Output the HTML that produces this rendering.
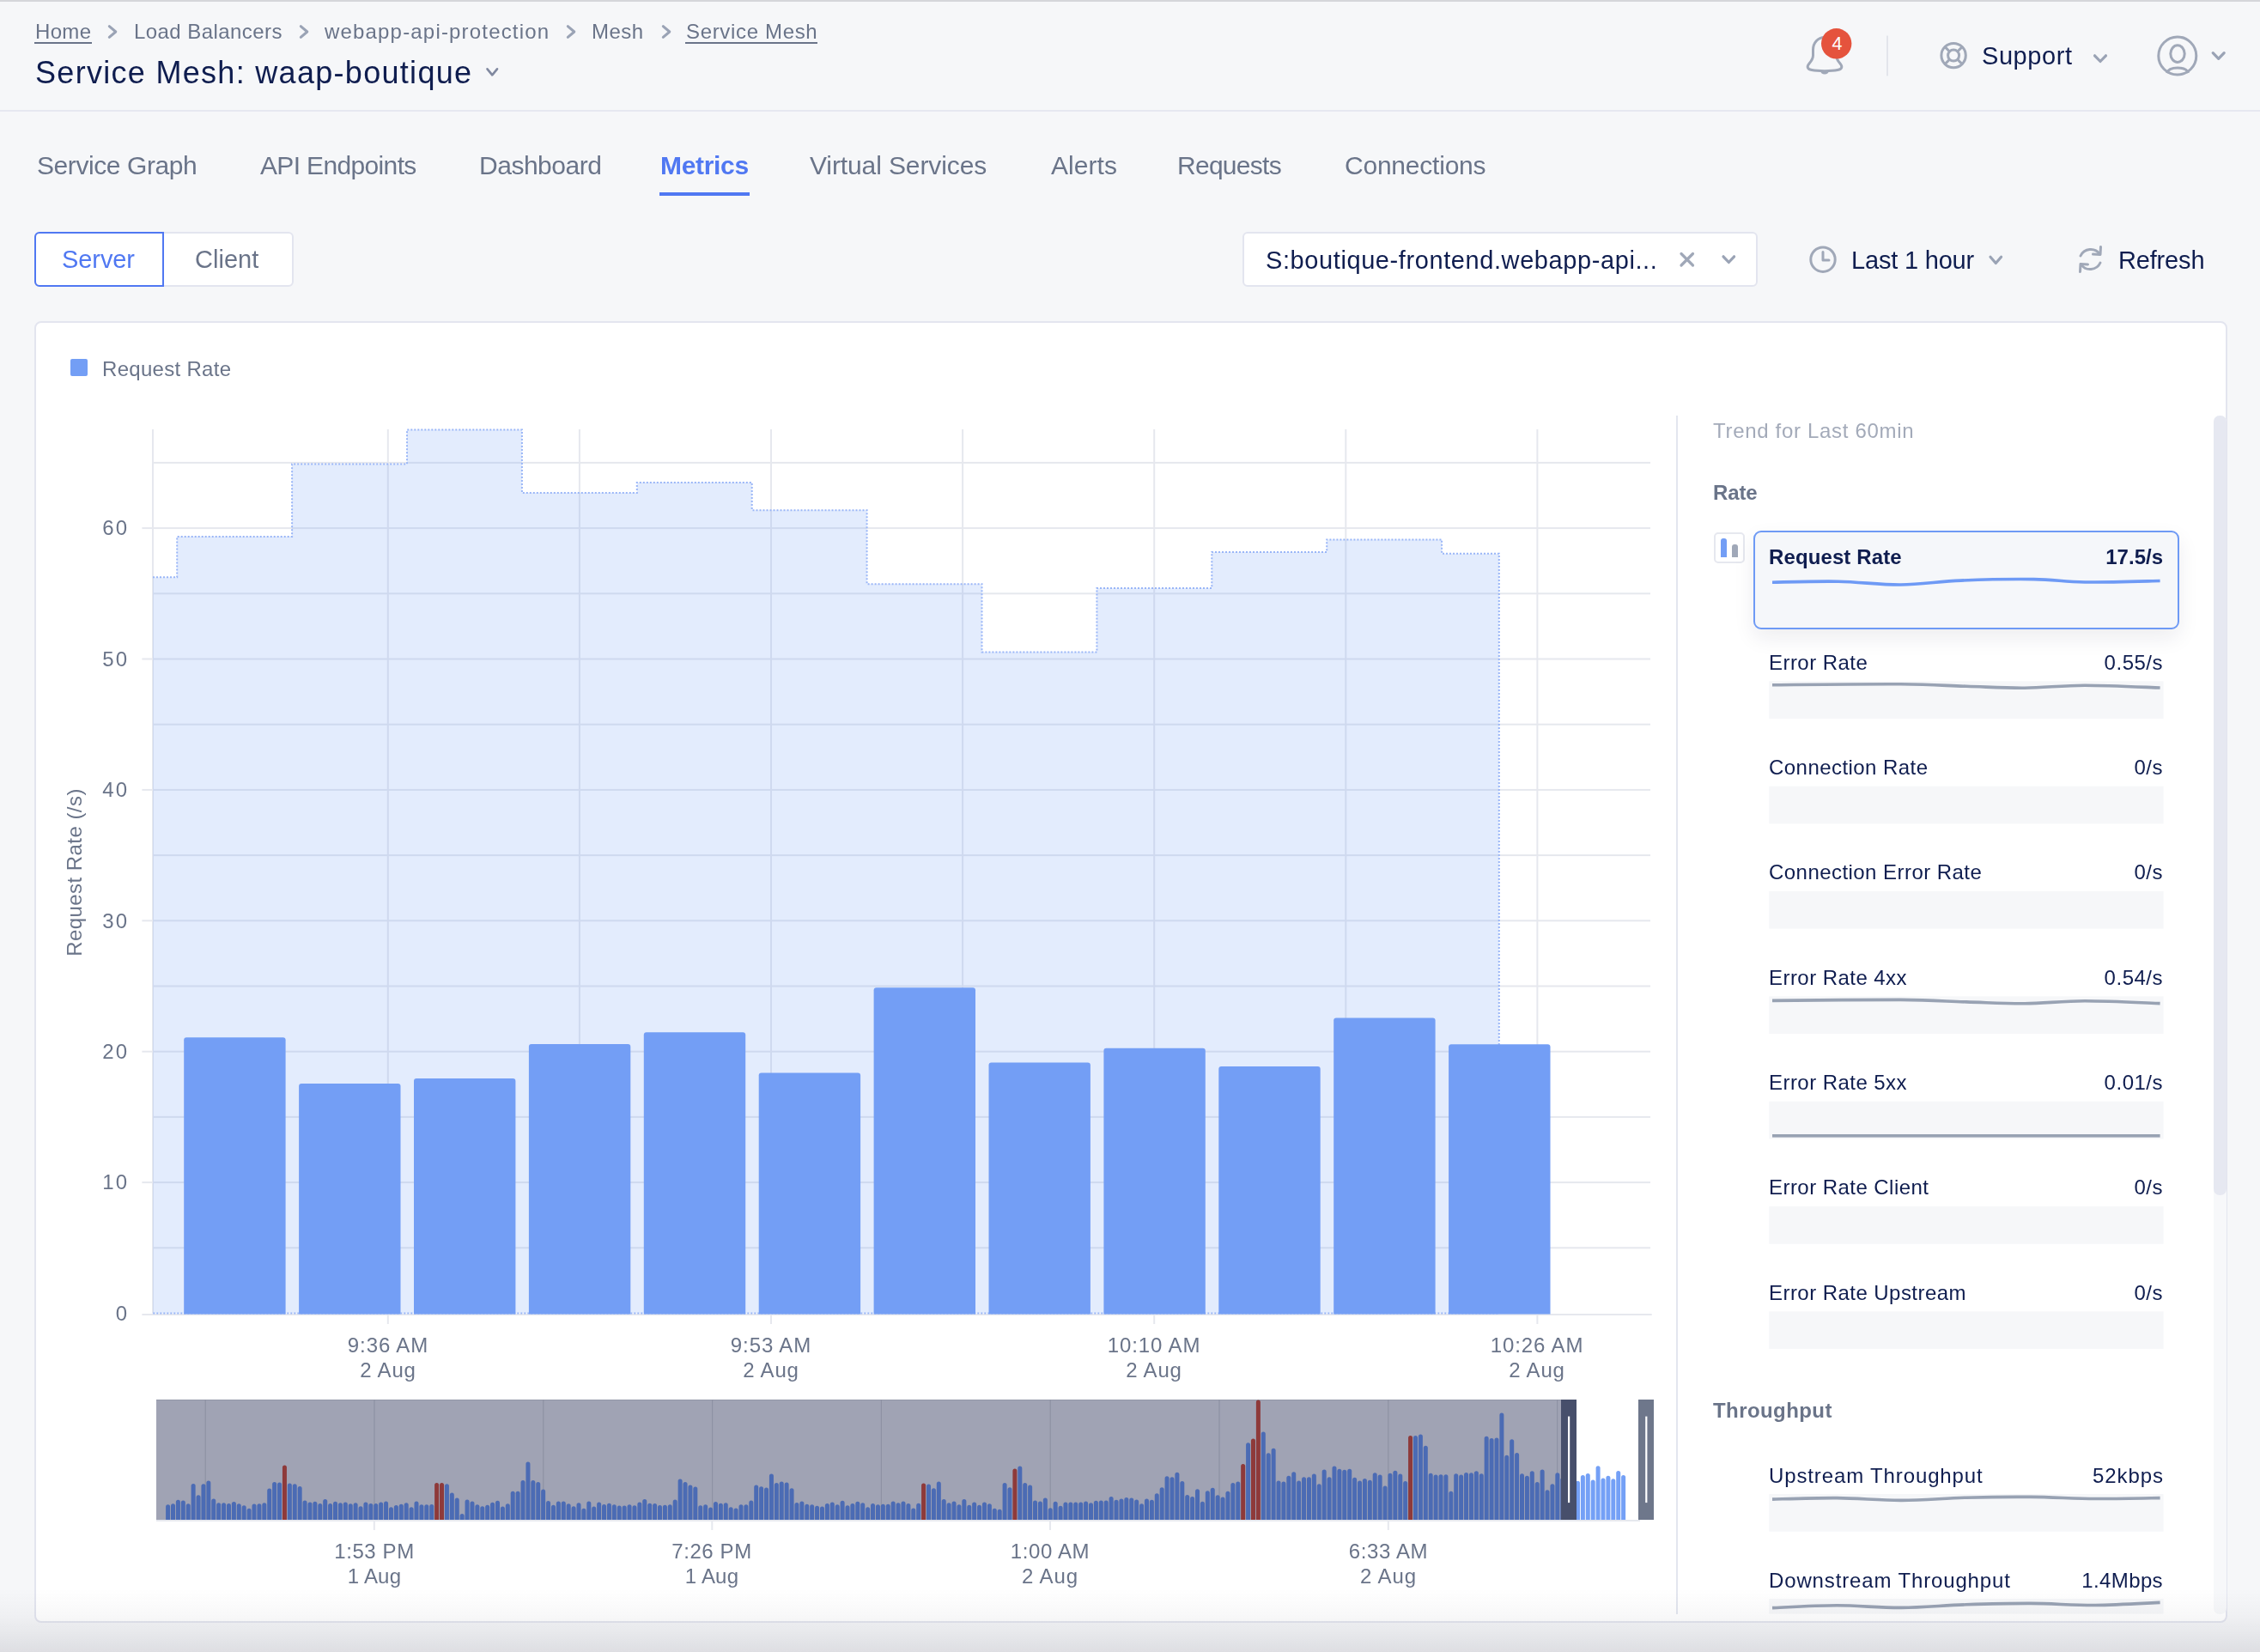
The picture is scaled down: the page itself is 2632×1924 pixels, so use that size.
<!DOCTYPE html>
<html><head><meta charset="utf-8">
<style>
*{margin:0;padding:0;box-sizing:border-box}
html,body{width:2632px;height:1924px;overflow:hidden;background:#f6f7f9;font-family:"Liberation Sans",sans-serif}
.a{position:absolute}
.t{position:absolute;white-space:nowrap;will-change:transform}
svg{position:absolute;left:0;top:0;overflow:visible}
</style></head><body>
<div class="a" style="left:0;top:0;width:2632px;height:2px;background:#d5d6da"></div>
<div class="a" style="left:0;top:128px;width:2632px;height:2px;background:#e6e8f1"></div>
<!-- breadcrumb underlines -->
<div class="a" style="left:40px;top:49px;width:67px;height:2px;background:#6a7489"></div>
<div class="a" style="left:798px;top:49px;width:153.5px;height:2px;background:#6a7489"></div>
<!-- tab underline -->
<div class="a" style="left:767.7px;top:223.5px;width:105px;height:4.5px;background:#5078f2"></div>
<!-- segmented -->
<div class="a" style="left:40px;top:270px;width:302px;height:64px;background:#fff;border:2px solid #e3e5ef;border-radius:6px"></div>
<div class="a" style="left:40px;top:270px;width:151px;height:64px;border:2px solid #5078f2;border-radius:6px 0 0 6px"></div>
<!-- select -->
<div class="a" style="left:1447px;top:270px;width:600px;height:64px;background:#fff;border:2px solid #e3e5ef;border-radius:6px"></div>
<!-- card -->
<div class="a" style="left:40px;top:374px;width:2554px;height:1516px;background:#fff;border:2px solid #e3e5ef;border-radius:8px"></div>
<!-- legend square -->
<div class="a" style="left:82px;top:418px;width:20px;height:20px;background:#739ef5;border-radius:2px"></div>
<!-- right panel divider -->
<div class="a" style="left:1952px;top:484px;width:2px;height:1396px;background:#e3e6ef"></div>
<!-- scrollbar -->
<div class="a" style="left:2578px;top:484px;width:15px;height:1396px;background:#f7f8fa;border-radius:7px"></div>
<div class="a" style="left:2578px;top:484px;width:15px;height:908px;background:#e6e8f1;border-radius:7px"></div>
<!-- icon box -->
<div class="a" style="left:1996px;top:620px;width:35.8px;height:35.6px;border:2px solid #e6e8ef;border-radius:5px;background:#fff"></div>
<div class="a" style="left:2003.7px;top:627px;width:7.3px;height:22px;background:#739ef5;border-radius:3px 3px 0 0"></div>
<div class="a" style="left:2016.5px;top:634px;width:7.4px;height:15px;background:#a0a8b8;border-radius:3px 3px 0 0"></div>
<!-- selected card -->
<div class="a" style="left:2042px;top:618.2px;width:495.5px;height:115px;background:#f5f7fa;border:2px solid #6e9af5;border-radius:9px;box-shadow:0 10px 24px rgba(20,30,60,0.08)"></div>
<svg width="2632" height="1924" viewBox="0 0 2632 1924"><rect x="2060.3" y="793.4" width="459.3" height="43.6" fill="#f6f7f9"/><rect x="2060.3" y="915.7" width="459.3" height="43.6" fill="#f6f7f9"/><rect x="2060.3" y="1038.0" width="459.3" height="43.6" fill="#f6f7f9"/><rect x="2060.3" y="1160.4" width="459.3" height="43.6" fill="#f6f7f9"/><rect x="2060.3" y="1282.8" width="459.3" height="43.6" fill="#f6f7f9"/><rect x="2060.3" y="1405.1" width="459.3" height="43.6" fill="#f6f7f9"/><rect x="2060.3" y="1527.4" width="459.3" height="43.6" fill="#f6f7f9"/><rect x="2060.3" y="1740.1" width="459.3" height="43.6" fill="#f6f7f9"/><rect x="2060.3" y="1862.0" width="459.3" height="17.6" fill="#f6f7f9"/><path d="M2064.0,678.2 C2076.8,678.0 2116.1,676.7 2141.0,677.2 C2165.9,677.7 2189.7,681.2 2213.5,681.0 C2237.3,680.8 2257.8,677.2 2283.6,676.1 C2309.4,675.0 2344.5,674.3 2368.6,674.6 C2392.7,674.9 2403.5,677.7 2428.0,678.0 C2452.5,678.3 2501.0,676.8 2515.6,676.5" fill="none" stroke="#6e9af5" stroke-width="3.6"/><path d="M2064.0,797.8 C2088.9,797.6 2175.8,796.5 2213.5,796.8 C2251.2,797.0 2265.9,798.6 2290.0,799.3 C2314.1,800.0 2335.0,801.4 2358.0,801.2 C2381.0,801.0 2401.7,798.2 2428.0,798.2 C2454.3,798.2 2501.0,800.5 2515.6,801.0" fill="none" stroke="#98a2b3" stroke-width="3.6"/><path d="M2064.0,1165.4 C2088.9,1165.2 2175.8,1164.2 2213.5,1164.4 C2251.2,1164.7 2265.9,1166.2 2290.0,1166.9 C2314.1,1167.6 2335.0,1169.0 2358.0,1168.8 C2381.0,1168.6 2401.7,1165.8 2428.0,1165.8 C2454.3,1165.8 2501.0,1168.1 2515.6,1168.6" fill="none" stroke="#98a2b3" stroke-width="3.6"/><rect x="2064" y="1321" width="451.6" height="3.6" fill="#98a2b3"/><path d="M2064.0,1746.1 C2076.6,1745.8 2114.2,1744.4 2139.3,1744.6 C2164.4,1744.8 2189.4,1747.5 2214.5,1747.4 C2239.6,1747.3 2264.7,1744.9 2289.8,1744.2 C2314.9,1743.5 2339.9,1743.2 2365.0,1743.4 C2390.1,1743.6 2415.2,1745.3 2440.3,1745.5 C2465.4,1745.7 2503.1,1744.8 2515.6,1744.6" fill="none" stroke="#98a2b3" stroke-width="3.6"/><path d="M2064.0,1872.6 C2076.6,1872.1 2114.2,1869.8 2139.3,1869.8 C2164.4,1869.8 2189.4,1872.6 2214.5,1872.4 C2239.6,1872.2 2264.7,1869.6 2289.8,1868.8 C2314.9,1868.0 2339.9,1867.3 2365.0,1867.4 C2390.1,1867.5 2415.2,1869.7 2440.3,1869.5 C2465.4,1869.3 2503.1,1866.9 2515.6,1866.4" fill="none" stroke="#98a2b3" stroke-width="3.6"/></svg>
<svg class="chart" width="2632" height="1924" viewBox="0 0 2632 1924"><rect x="165.4" y="1530.0" width="1758.3" height="2" fill="#e6e8ee"/><rect x="178" y="1452.3" width="1744.0" height="2" fill="#e6e8ee"/><rect x="165.4" y="1376.1" width="1756.6" height="2" fill="#e6e8ee"/><rect x="178" y="1299.9" width="1744.0" height="2" fill="#e6e8ee"/><rect x="165.4" y="1223.7" width="1756.6" height="2" fill="#e6e8ee"/><rect x="178" y="1147.5" width="1744.0" height="2" fill="#e6e8ee"/><rect x="165.4" y="1071.3" width="1756.6" height="2" fill="#e6e8ee"/><rect x="178" y="995.1" width="1744.0" height="2" fill="#e6e8ee"/><rect x="165.4" y="918.9" width="1756.6" height="2" fill="#e6e8ee"/><rect x="178" y="842.7" width="1744.0" height="2" fill="#e6e8ee"/><rect x="165.4" y="766.5" width="1756.6" height="2" fill="#e6e8ee"/><rect x="178" y="690.3" width="1744.0" height="2" fill="#e6e8ee"/><rect x="165.4" y="614.1" width="1756.6" height="2" fill="#e6e8ee"/><rect x="178" y="537.9" width="1744.0" height="2" fill="#e6e8ee"/><rect x="450.8" y="500" width="2" height="1042.0" fill="#e6e8ee"/><rect x="673.9" y="500" width="2" height="1029.5" fill="#e6e8ee"/><rect x="897.0" y="500" width="2" height="1042.0" fill="#e6e8ee"/><rect x="1120.1" y="500" width="2" height="1029.5" fill="#e6e8ee"/><rect x="1343.2" y="500" width="2" height="1042.0" fill="#e6e8ee"/><rect x="1566.3" y="500" width="2" height="1029.5" fill="#e6e8ee"/><rect x="1789.4" y="500" width="2" height="1042.0" fill="#e6e8ee"/><rect x="177" y="500" width="2" height="1029.5" fill="#e6e8ee"/><path d="M178.0,672.2 L206.2,672.2 L206.2,624.9 L340.1,624.9 L340.1,540.4 L474.0,540.4 L474.0,500.5 L607.9,500.5 L607.9,574.0 L741.8,574.0 L741.8,562.0 L875.7,562.0 L875.7,594.3 L1009.6,594.3 L1009.6,680.2 L1143.5,680.2 L1143.5,759.4 L1277.4,759.4 L1277.4,685.0 L1411.3,685.0 L1411.3,643.0 L1545.2,643.0 L1545.2,628.4 L1679.1,628.4 L1679.1,644.8 L1745.8,644.8 L1745.8,1529.5 L178.0,1529.5 Z" fill="rgba(115,158,245,0.2)"/><path d="M178.0,672.2 L206.2,672.2 L206.2,624.9 L340.1,624.9 L340.1,540.4 L474.0,540.4 L474.0,500.5 L607.9,500.5 L607.9,574.0 L741.8,574.0 L741.8,562.0 L875.7,562.0 L875.7,594.3 L1009.6,594.3 L1009.6,680.2 L1143.5,680.2 L1143.5,759.4 L1277.4,759.4 L1277.4,685.0 L1411.3,685.0 L1411.3,643.0 L1545.2,643.0 L1545.2,628.4 L1679.1,628.4 L1679.1,644.8 L1745.8,644.8 L1745.8,1529.5 L178.0,1529.5" fill="none" stroke="#9ab6f7" stroke-width="2" stroke-dasharray="2 2"/><path d="M214.2,1530.5 V1211.2 Q214.2,1208.2 217.2,1208.2 H329.6 Q332.6,1208.2 332.6,1211.2 V1530.5 Z" fill="#739ef5"/><path d="M348.1,1530.5 V1265.0 Q348.1,1262.0 351.1,1262.0 H463.5 Q466.5,1262.0 466.5,1265.0 V1530.5 Z" fill="#739ef5"/><path d="M482.0,1530.5 V1259.0 Q482.0,1256.0 485.0,1256.0 H597.4 Q600.4,1256.0 600.4,1259.0 V1530.5 Z" fill="#739ef5"/><path d="M615.9,1530.5 V1219.0 Q615.9,1216.0 618.9,1216.0 H731.3 Q734.3,1216.0 734.3,1219.0 V1530.5 Z" fill="#739ef5"/><path d="M749.8,1530.5 V1205.2 Q749.8,1202.2 752.8,1202.2 H865.2 Q868.2,1202.2 868.2,1205.2 V1530.5 Z" fill="#739ef5"/><path d="M883.7,1530.5 V1252.6 Q883.7,1249.6 886.7,1249.6 H999.1 Q1002.1,1249.6 1002.1,1252.6 V1530.5 Z" fill="#739ef5"/><path d="M1017.6,1530.5 V1153.2 Q1017.6,1150.2 1020.6,1150.2 H1133.0 Q1136.0,1150.2 1136.0,1153.2 V1530.5 Z" fill="#739ef5"/><path d="M1151.5,1530.5 V1240.5 Q1151.5,1237.5 1154.5,1237.5 H1266.9 Q1269.9,1237.5 1269.9,1240.5 V1530.5 Z" fill="#739ef5"/><path d="M1285.4,1530.5 V1223.8 Q1285.4,1220.8 1288.4,1220.8 H1400.8 Q1403.8,1220.8 1403.8,1223.8 V1530.5 Z" fill="#739ef5"/><path d="M1419.3,1530.5 V1245.0 Q1419.3,1242.0 1422.3,1242.0 H1534.7 Q1537.7,1242.0 1537.7,1245.0 V1530.5 Z" fill="#739ef5"/><path d="M1553.2,1530.5 V1188.6 Q1553.2,1185.6 1556.2,1185.6 H1668.6 Q1671.6,1185.6 1671.6,1188.6 V1530.5 Z" fill="#739ef5"/><path d="M1687.1,1530.5 V1219.2 Q1687.1,1216.2 1690.1,1216.2 H1802.5 Q1805.5,1216.2 1805.5,1219.2 V1530.5 Z" fill="#739ef5"/><rect x="182" y="1630" width="1636" height="140" fill="#a0a3b4"/><rect x="182" y="1630" width="1636" height="1" fill="#9397a8"/><rect x="238.6" y="1630" width="1.2" height="140" fill="#8e92a4"/><rect x="435.4" y="1630" width="1.2" height="140" fill="#8e92a4"/><rect x="632.2" y="1630" width="1.2" height="140" fill="#8e92a4"/><rect x="829.0" y="1630" width="1.2" height="140" fill="#8e92a4"/><rect x="1025.8" y="1630" width="1.2" height="140" fill="#8e92a4"/><rect x="1222.6" y="1630" width="1.2" height="140" fill="#8e92a4"/><rect x="1419.4" y="1630" width="1.2" height="140" fill="#8e92a4"/><rect x="1616.2" y="1630" width="1.2" height="140" fill="#8e92a4"/><rect x="1813.0" y="1630" width="1.2" height="140" fill="#8e92a4"/><rect x="434.8" y="1770" width="2" height="12" fill="#e6e8ee"/><rect x="828.3" y="1770" width="2" height="12" fill="#e6e8ee"/><rect x="1222.0" y="1770" width="2" height="12" fill="#e6e8ee"/><rect x="1615.8" y="1770" width="2" height="12" fill="#e6e8ee"/><rect x="182" y="1770" width="1728" height="2" fill="#e6e8ee"/><path d="M193.10,1770 V1754.80 A2.3,2.3 0 0 1 198.10,1754.80 V1770 Z" fill="#4b6bb4"/><path d="M199.01,1770 V1753.80 A2.3,2.3 0 0 1 204.01,1753.80 V1770 Z" fill="#4b6bb4"/><path d="M204.91,1770 V1749.30 A2.3,2.3 0 0 1 209.91,1749.30 V1770 Z" fill="#4b6bb4"/><path d="M210.82,1770 V1749.90 A2.3,2.3 0 0 1 215.82,1749.90 V1770 Z" fill="#4b6bb4"/><path d="M216.72,1770 V1753.80 A2.3,2.3 0 0 1 221.72,1753.80 V1770 Z" fill="#4b6bb4"/><path d="M222.63,1770 V1730.40 A2.3,2.3 0 0 1 227.63,1730.40 V1770 Z" fill="#4b6bb4"/><path d="M228.54,1770 V1743.70 A2.3,2.3 0 0 1 233.54,1743.70 V1770 Z" fill="#4b6bb4"/><path d="M234.44,1770 V1730.80 A2.3,2.3 0 0 1 239.44,1730.80 V1770 Z" fill="#4b6bb4"/><path d="M240.35,1770 V1727.10 A2.3,2.3 0 0 1 245.35,1727.10 V1770 Z" fill="#4b6bb4"/><path d="M246.25,1770 V1748.00 A2.3,2.3 0 0 1 251.25,1748.00 V1770 Z" fill="#4b6bb4"/><path d="M252.16,1770 V1752.80 A2.3,2.3 0 0 1 257.16,1752.80 V1770 Z" fill="#4b6bb4"/><path d="M258.07,1770 V1752.80 A2.3,2.3 0 0 1 263.07,1752.80 V1770 Z" fill="#4b6bb4"/><path d="M263.97,1770 V1753.40 A2.3,2.3 0 0 1 268.97,1753.40 V1770 Z" fill="#4b6bb4"/><path d="M269.88,1770 V1751.50 A2.3,2.3 0 0 1 274.88,1751.50 V1770 Z" fill="#4b6bb4"/><path d="M275.78,1770 V1753.80 A2.3,2.3 0 0 1 280.78,1753.80 V1770 Z" fill="#4b6bb4"/><path d="M281.69,1770 V1755.80 A2.3,2.3 0 0 1 286.69,1755.80 V1770 Z" fill="#4b6bb4"/><path d="M287.60,1770 V1759.30 A2.3,2.3 0 0 1 292.60,1759.30 V1770 Z" fill="#4b6bb4"/><path d="M293.50,1770 V1754.00 A2.3,2.3 0 0 1 298.50,1754.00 V1770 Z" fill="#4b6bb4"/><path d="M299.41,1770 V1753.80 A2.3,2.3 0 0 1 304.41,1753.80 V1770 Z" fill="#4b6bb4"/><path d="M305.31,1770 V1752.80 A2.3,2.3 0 0 1 310.31,1752.80 V1770 Z" fill="#4b6bb4"/><path d="M311.22,1770 V1735.90 A2.3,2.3 0 0 1 316.22,1735.90 V1770 Z" fill="#4b6bb4"/><path d="M317.13,1770 V1728.50 A2.3,2.3 0 0 1 322.13,1728.50 V1770 Z" fill="#4b6bb4"/><path d="M323.03,1770 V1729.10 A2.3,2.3 0 0 1 328.03,1729.10 V1770 Z" fill="#4b6bb4"/><path d="M328.94,1770 V1709.00 A2.3,2.3 0 0 1 333.94,1709.00 V1770 Z" fill="#8e3a3a"/><path d="M334.84,1770 V1729.90 A2.3,2.3 0 0 1 339.84,1729.90 V1770 Z" fill="#4b6bb4"/><path d="M340.75,1770 V1730.80 A2.3,2.3 0 0 1 345.75,1730.80 V1770 Z" fill="#4b6bb4"/><path d="M346.66,1770 V1733.40 A2.3,2.3 0 0 1 351.66,1733.40 V1770 Z" fill="#4b6bb4"/><path d="M352.56,1770 V1749.90 A2.3,2.3 0 0 1 357.56,1749.90 V1770 Z" fill="#4b6bb4"/><path d="M358.47,1770 V1751.90 A2.3,2.3 0 0 1 363.47,1751.90 V1770 Z" fill="#4b6bb4"/><path d="M364.37,1770 V1751.30 A2.3,2.3 0 0 1 369.37,1751.30 V1770 Z" fill="#4b6bb4"/><path d="M370.28,1770 V1753.40 A2.3,2.3 0 0 1 375.28,1753.40 V1770 Z" fill="#4b6bb4"/><path d="M376.19,1770 V1748.50 A2.3,2.3 0 0 1 381.19,1748.50 V1770 Z" fill="#4b6bb4"/><path d="M382.09,1770 V1753.40 A2.3,2.3 0 0 1 387.09,1753.40 V1770 Z" fill="#4b6bb4"/><path d="M388.00,1770 V1751.30 A2.3,2.3 0 0 1 393.00,1751.30 V1770 Z" fill="#4b6bb4"/><path d="M393.90,1770 V1752.80 A2.3,2.3 0 0 1 398.90,1752.80 V1770 Z" fill="#4b6bb4"/><path d="M399.81,1770 V1751.90 A2.3,2.3 0 0 1 404.81,1751.90 V1770 Z" fill="#4b6bb4"/><path d="M405.72,1770 V1753.80 A2.3,2.3 0 0 1 410.72,1753.80 V1770 Z" fill="#4b6bb4"/><path d="M411.62,1770 V1752.80 A2.3,2.3 0 0 1 416.62,1752.80 V1770 Z" fill="#4b6bb4"/><path d="M417.53,1770 V1756.70 A2.3,2.3 0 0 1 422.53,1756.70 V1770 Z" fill="#4b6bb4"/><path d="M423.43,1770 V1751.90 A2.3,2.3 0 0 1 428.43,1751.90 V1770 Z" fill="#4b6bb4"/><path d="M429.34,1770 V1753.40 A2.3,2.3 0 0 1 434.34,1753.40 V1770 Z" fill="#4b6bb4"/><path d="M435.25,1770 V1753.40 A2.3,2.3 0 0 1 440.25,1753.40 V1770 Z" fill="#4b6bb4"/><path d="M441.15,1770 V1751.90 A2.3,2.3 0 0 1 446.15,1751.90 V1770 Z" fill="#4b6bb4"/><path d="M447.06,1770 V1750.90 A2.3,2.3 0 0 1 452.06,1750.90 V1770 Z" fill="#4b6bb4"/><path d="M452.96,1770 V1757.70 A2.3,2.3 0 0 1 457.96,1757.70 V1770 Z" fill="#4b6bb4"/><path d="M458.87,1770 V1755.40 A2.3,2.3 0 0 1 463.87,1755.40 V1770 Z" fill="#4b6bb4"/><path d="M464.78,1770 V1754.20 A2.3,2.3 0 0 1 469.78,1754.20 V1770 Z" fill="#4b6bb4"/><path d="M470.68,1770 V1752.80 A2.3,2.3 0 0 1 475.68,1752.80 V1770 Z" fill="#4b6bb4"/><path d="M476.59,1770 V1757.70 A2.3,2.3 0 0 1 481.59,1757.70 V1770 Z" fill="#4b6bb4"/><path d="M482.49,1770 V1750.90 A2.3,2.3 0 0 1 487.49,1750.90 V1770 Z" fill="#4b6bb4"/><path d="M488.40,1770 V1754.80 A2.3,2.3 0 0 1 493.40,1754.80 V1770 Z" fill="#4b6bb4"/><path d="M494.31,1770 V1754.80 A2.3,2.3 0 0 1 499.31,1754.80 V1770 Z" fill="#4b6bb4"/><path d="M500.21,1770 V1754.40 A2.3,2.3 0 0 1 505.21,1754.40 V1770 Z" fill="#4b6bb4"/><path d="M506.12,1770 V1729.50 A2.3,2.3 0 0 1 511.12,1729.50 V1770 Z" fill="#8e3a3a"/><path d="M512.02,1770 V1729.50 A2.3,2.3 0 0 1 517.02,1729.50 V1770 Z" fill="#8e3a3a"/><path d="M517.93,1770 V1730.80 A2.3,2.3 0 0 1 522.93,1730.80 V1770 Z" fill="#4b6bb4"/><path d="M523.84,1770 V1741.10 A2.3,2.3 0 0 1 528.84,1741.10 V1770 Z" fill="#4b6bb4"/><path d="M529.74,1770 V1747.00 A2.3,2.3 0 0 1 534.74,1747.00 V1770 Z" fill="#4b6bb4"/><path d="M535.65,1770 V1765.50 A2.3,2.3 0 0 1 540.65,1765.50 V1770 Z" fill="#4b6bb4"/><path d="M541.55,1770 V1748.90 A2.3,2.3 0 0 1 546.55,1748.90 V1770 Z" fill="#4b6bb4"/><path d="M547.46,1770 V1750.90 A2.3,2.3 0 0 1 552.46,1750.90 V1770 Z" fill="#4b6bb4"/><path d="M553.37,1770 V1754.80 A2.3,2.3 0 0 1 558.37,1754.80 V1770 Z" fill="#4b6bb4"/><path d="M559.27,1770 V1756.70 A2.3,2.3 0 0 1 564.27,1756.70 V1770 Z" fill="#4b6bb4"/><path d="M565.18,1770 V1755.20 A2.3,2.3 0 0 1 570.18,1755.20 V1770 Z" fill="#4b6bb4"/><path d="M571.08,1770 V1752.30 A2.3,2.3 0 0 1 576.08,1752.30 V1770 Z" fill="#4b6bb4"/><path d="M576.99,1770 V1750.30 A2.3,2.3 0 0 1 581.99,1750.30 V1770 Z" fill="#4b6bb4"/><path d="M582.90,1770 V1757.10 A2.3,2.3 0 0 1 587.90,1757.10 V1770 Z" fill="#4b6bb4"/><path d="M588.80,1770 V1753.80 A2.3,2.3 0 0 1 593.80,1753.80 V1770 Z" fill="#4b6bb4"/><path d="M594.71,1770 V1739.20 A2.3,2.3 0 0 1 599.71,1739.20 V1770 Z" fill="#4b6bb4"/><path d="M600.61,1770 V1739.20 A2.3,2.3 0 0 1 605.61,1739.20 V1770 Z" fill="#4b6bb4"/><path d="M606.52,1770 V1726.50 A2.3,2.3 0 0 1 611.52,1726.50 V1770 Z" fill="#4b6bb4"/><path d="M612.43,1770 V1705.10 A2.3,2.3 0 0 1 617.43,1705.10 V1770 Z" fill="#4b6bb4"/><path d="M618.33,1770 V1726.50 A2.3,2.3 0 0 1 623.33,1726.50 V1770 Z" fill="#4b6bb4"/><path d="M624.24,1770 V1728.50 A2.3,2.3 0 0 1 629.24,1728.50 V1770 Z" fill="#4b6bb4"/><path d="M630.14,1770 V1736.90 A2.3,2.3 0 0 1 635.14,1736.90 V1770 Z" fill="#4b6bb4"/><path d="M636.05,1770 V1750.50 A2.3,2.3 0 0 1 641.05,1750.50 V1770 Z" fill="#4b6bb4"/><path d="M641.96,1770 V1755.20 A2.3,2.3 0 0 1 646.96,1755.20 V1770 Z" fill="#4b6bb4"/><path d="M647.86,1770 V1750.90 A2.3,2.3 0 0 1 652.86,1750.90 V1770 Z" fill="#4b6bb4"/><path d="M653.77,1770 V1750.90 A2.3,2.3 0 0 1 658.77,1750.90 V1770 Z" fill="#4b6bb4"/><path d="M659.67,1770 V1753.80 A2.3,2.3 0 0 1 664.67,1753.80 V1770 Z" fill="#4b6bb4"/><path d="M665.58,1770 V1756.70 A2.3,2.3 0 0 1 670.58,1756.70 V1770 Z" fill="#4b6bb4"/><path d="M671.49,1770 V1752.80 A2.3,2.3 0 0 1 676.49,1752.80 V1770 Z" fill="#4b6bb4"/><path d="M677.39,1770 V1759.30 A2.3,2.3 0 0 1 682.39,1759.30 V1770 Z" fill="#4b6bb4"/><path d="M683.30,1770 V1750.90 A2.3,2.3 0 0 1 688.30,1750.90 V1770 Z" fill="#4b6bb4"/><path d="M689.20,1770 V1757.10 A2.3,2.3 0 0 1 694.20,1757.10 V1770 Z" fill="#4b6bb4"/><path d="M695.11,1770 V1751.90 A2.3,2.3 0 0 1 700.11,1751.90 V1770 Z" fill="#4b6bb4"/><path d="M701.02,1770 V1754.40 A2.3,2.3 0 0 1 706.02,1754.40 V1770 Z" fill="#4b6bb4"/><path d="M706.92,1770 V1753.20 A2.3,2.3 0 0 1 711.92,1753.20 V1770 Z" fill="#4b6bb4"/><path d="M712.83,1770 V1754.80 A2.3,2.3 0 0 1 717.83,1754.80 V1770 Z" fill="#4b6bb4"/><path d="M718.73,1770 V1756.10 A2.3,2.3 0 0 1 723.73,1756.10 V1770 Z" fill="#4b6bb4"/><path d="M724.64,1770 V1756.10 A2.3,2.3 0 0 1 729.64,1756.10 V1770 Z" fill="#4b6bb4"/><path d="M730.55,1770 V1754.80 A2.3,2.3 0 0 1 735.55,1754.80 V1770 Z" fill="#4b6bb4"/><path d="M736.45,1770 V1755.80 A2.3,2.3 0 0 1 741.45,1755.80 V1770 Z" fill="#4b6bb4"/><path d="M742.36,1770 V1751.90 A2.3,2.3 0 0 1 747.36,1751.90 V1770 Z" fill="#4b6bb4"/><path d="M748.26,1770 V1748.40 A2.3,2.3 0 0 1 753.26,1748.40 V1770 Z" fill="#4b6bb4"/><path d="M754.17,1770 V1753.20 A2.3,2.3 0 0 1 759.17,1753.20 V1770 Z" fill="#4b6bb4"/><path d="M760.08,1770 V1753.40 A2.3,2.3 0 0 1 765.08,1753.40 V1770 Z" fill="#4b6bb4"/><path d="M765.98,1770 V1755.40 A2.3,2.3 0 0 1 770.98,1755.40 V1770 Z" fill="#4b6bb4"/><path d="M771.89,1770 V1755.20 A2.3,2.3 0 0 1 776.89,1755.20 V1770 Z" fill="#4b6bb4"/><path d="M777.79,1770 V1754.80 A2.3,2.3 0 0 1 782.79,1754.80 V1770 Z" fill="#4b6bb4"/><path d="M783.70,1770 V1748.90 A2.3,2.3 0 0 1 788.70,1748.90 V1770 Z" fill="#4b6bb4"/><path d="M789.61,1770 V1725.00 A2.3,2.3 0 0 1 794.61,1725.00 V1770 Z" fill="#4b6bb4"/><path d="M795.51,1770 V1728.50 A2.3,2.3 0 0 1 800.51,1728.50 V1770 Z" fill="#4b6bb4"/><path d="M801.42,1770 V1732.00 A2.3,2.3 0 0 1 806.42,1732.00 V1770 Z" fill="#4b6bb4"/><path d="M807.32,1770 V1733.90 A2.3,2.3 0 0 1 812.32,1733.90 V1770 Z" fill="#4b6bb4"/><path d="M813.23,1770 V1755.80 A2.3,2.3 0 0 1 818.23,1755.80 V1770 Z" fill="#4b6bb4"/><path d="M819.14,1770 V1754.80 A2.3,2.3 0 0 1 824.14,1754.80 V1770 Z" fill="#4b6bb4"/><path d="M825.04,1770 V1758.10 A2.3,2.3 0 0 1 830.04,1758.10 V1770 Z" fill="#4b6bb4"/><path d="M830.95,1770 V1751.50 A2.3,2.3 0 0 1 835.95,1751.50 V1770 Z" fill="#4b6bb4"/><path d="M836.85,1770 V1753.20 A2.3,2.3 0 0 1 841.85,1753.20 V1770 Z" fill="#4b6bb4"/><path d="M842.76,1770 V1752.80 A2.3,2.3 0 0 1 847.76,1752.80 V1770 Z" fill="#4b6bb4"/><path d="M848.67,1770 V1757.70 A2.3,2.3 0 0 1 853.67,1757.70 V1770 Z" fill="#4b6bb4"/><path d="M854.57,1770 V1759.10 A2.3,2.3 0 0 1 859.57,1759.10 V1770 Z" fill="#4b6bb4"/><path d="M860.48,1770 V1754.80 A2.3,2.3 0 0 1 865.48,1754.80 V1770 Z" fill="#4b6bb4"/><path d="M866.38,1770 V1754.80 A2.3,2.3 0 0 1 871.38,1754.80 V1770 Z" fill="#4b6bb4"/><path d="M872.29,1770 V1749.90 A2.3,2.3 0 0 1 877.29,1749.90 V1770 Z" fill="#4b6bb4"/><path d="M878.20,1770 V1732.00 A2.3,2.3 0 0 1 883.20,1732.00 V1770 Z" fill="#4b6bb4"/><path d="M884.10,1770 V1733.70 A2.3,2.3 0 0 1 889.10,1733.70 V1770 Z" fill="#4b6bb4"/><path d="M890.01,1770 V1734.90 A2.3,2.3 0 0 1 895.01,1734.90 V1770 Z" fill="#4b6bb4"/><path d="M895.91,1770 V1719.10 A2.3,2.3 0 0 1 900.91,1719.10 V1770 Z" fill="#4b6bb4"/><path d="M901.82,1770 V1729.50 A2.3,2.3 0 0 1 906.82,1729.50 V1770 Z" fill="#4b6bb4"/><path d="M907.73,1770 V1728.10 A2.3,2.3 0 0 1 912.73,1728.10 V1770 Z" fill="#4b6bb4"/><path d="M913.63,1770 V1728.90 A2.3,2.3 0 0 1 918.63,1728.90 V1770 Z" fill="#4b6bb4"/><path d="M919.54,1770 V1735.70 A2.3,2.3 0 0 1 924.54,1735.70 V1770 Z" fill="#4b6bb4"/><path d="M925.44,1770 V1752.40 A2.3,2.3 0 0 1 930.44,1752.40 V1770 Z" fill="#4b6bb4"/><path d="M931.35,1770 V1750.90 A2.3,2.3 0 0 1 936.35,1750.90 V1770 Z" fill="#4b6bb4"/><path d="M937.26,1770 V1754.20 A2.3,2.3 0 0 1 942.26,1754.20 V1770 Z" fill="#4b6bb4"/><path d="M943.16,1770 V1754.80 A2.3,2.3 0 0 1 948.16,1754.80 V1770 Z" fill="#4b6bb4"/><path d="M949.07,1770 V1756.30 A2.3,2.3 0 0 1 954.07,1756.30 V1770 Z" fill="#4b6bb4"/><path d="M954.97,1770 V1757.10 A2.3,2.3 0 0 1 959.97,1757.10 V1770 Z" fill="#4b6bb4"/><path d="M960.88,1770 V1753.40 A2.3,2.3 0 0 1 965.88,1753.40 V1770 Z" fill="#4b6bb4"/><path d="M966.79,1770 V1751.90 A2.3,2.3 0 0 1 971.79,1751.90 V1770 Z" fill="#4b6bb4"/><path d="M972.69,1770 V1754.80 A2.3,2.3 0 0 1 977.69,1754.80 V1770 Z" fill="#4b6bb4"/><path d="M978.60,1770 V1750.30 A2.3,2.3 0 0 1 983.60,1750.30 V1770 Z" fill="#4b6bb4"/><path d="M984.50,1770 V1755.80 A2.3,2.3 0 0 1 989.50,1755.80 V1770 Z" fill="#4b6bb4"/><path d="M990.41,1770 V1753.40 A2.3,2.3 0 0 1 995.41,1753.40 V1770 Z" fill="#4b6bb4"/><path d="M996.32,1770 V1751.30 A2.3,2.3 0 0 1 1001.32,1751.30 V1770 Z" fill="#4b6bb4"/><path d="M1002.22,1770 V1752.80 A2.3,2.3 0 0 1 1007.22,1752.80 V1770 Z" fill="#4b6bb4"/><path d="M1008.13,1770 V1757.70 A2.3,2.3 0 0 1 1013.13,1757.70 V1770 Z" fill="#4b6bb4"/><path d="M1014.03,1770 V1753.40 A2.3,2.3 0 0 1 1019.03,1753.40 V1770 Z" fill="#4b6bb4"/><path d="M1019.94,1770 V1754.80 A2.3,2.3 0 0 1 1024.94,1754.80 V1770 Z" fill="#4b6bb4"/><path d="M1025.85,1770 V1754.20 A2.3,2.3 0 0 1 1030.85,1754.20 V1770 Z" fill="#4b6bb4"/><path d="M1031.75,1770 V1754.20 A2.3,2.3 0 0 1 1036.75,1754.20 V1770 Z" fill="#4b6bb4"/><path d="M1037.66,1770 V1750.90 A2.3,2.3 0 0 1 1042.66,1750.90 V1770 Z" fill="#4b6bb4"/><path d="M1043.56,1770 V1752.80 A2.3,2.3 0 0 1 1048.56,1752.80 V1770 Z" fill="#4b6bb4"/><path d="M1049.47,1770 V1750.90 A2.3,2.3 0 0 1 1054.47,1750.90 V1770 Z" fill="#4b6bb4"/><path d="M1055.38,1770 V1753.40 A2.3,2.3 0 0 1 1060.38,1753.40 V1770 Z" fill="#4b6bb4"/><path d="M1061.28,1770 V1759.10 A2.3,2.3 0 0 1 1066.28,1759.10 V1770 Z" fill="#4b6bb4"/><path d="M1067.19,1770 V1753.20 A2.3,2.3 0 0 1 1072.19,1753.20 V1770 Z" fill="#4b6bb4"/><path d="M1073.09,1770 V1729.90 A2.3,2.3 0 0 1 1078.09,1729.90 V1770 Z" fill="#8e3a3a"/><path d="M1079.00,1770 V1731.00 A2.3,2.3 0 0 1 1084.00,1731.00 V1770 Z" fill="#4b6bb4"/><path d="M1084.91,1770 V1735.70 A2.3,2.3 0 0 1 1089.91,1735.70 V1770 Z" fill="#4b6bb4"/><path d="M1090.81,1770 V1728.10 A2.3,2.3 0 0 1 1095.81,1728.10 V1770 Z" fill="#4b6bb4"/><path d="M1096.72,1770 V1748.40 A2.3,2.3 0 0 1 1101.72,1748.40 V1770 Z" fill="#4b6bb4"/><path d="M1102.62,1770 V1752.80 A2.3,2.3 0 0 1 1107.62,1752.80 V1770 Z" fill="#4b6bb4"/><path d="M1108.53,1770 V1750.90 A2.3,2.3 0 0 1 1113.53,1750.90 V1770 Z" fill="#4b6bb4"/><path d="M1114.44,1770 V1754.80 A2.3,2.3 0 0 1 1119.44,1754.80 V1770 Z" fill="#4b6bb4"/><path d="M1120.34,1770 V1748.40 A2.3,2.3 0 0 1 1125.34,1748.40 V1770 Z" fill="#4b6bb4"/><path d="M1126.25,1770 V1755.20 A2.3,2.3 0 0 1 1131.25,1755.20 V1770 Z" fill="#4b6bb4"/><path d="M1132.15,1770 V1751.90 A2.3,2.3 0 0 1 1137.15,1751.90 V1770 Z" fill="#4b6bb4"/><path d="M1138.06,1770 V1755.20 A2.3,2.3 0 0 1 1143.06,1755.20 V1770 Z" fill="#4b6bb4"/><path d="M1143.97,1770 V1751.90 A2.3,2.3 0 0 1 1148.97,1751.90 V1770 Z" fill="#4b6bb4"/><path d="M1149.87,1770 V1753.80 A2.3,2.3 0 0 1 1154.87,1753.80 V1770 Z" fill="#4b6bb4"/><path d="M1155.78,1770 V1759.30 A2.3,2.3 0 0 1 1160.78,1759.30 V1770 Z" fill="#4b6bb4"/><path d="M1161.68,1770 V1760.20 A2.3,2.3 0 0 1 1166.68,1760.20 V1770 Z" fill="#4b6bb4"/><path d="M1167.59,1770 V1729.50 A2.3,2.3 0 0 1 1172.59,1729.50 V1770 Z" fill="#4b6bb4"/><path d="M1173.50,1770 V1734.70 A2.3,2.3 0 0 1 1178.50,1734.70 V1770 Z" fill="#4b6bb4"/><path d="M1179.40,1770 V1712.90 A2.3,2.3 0 0 1 1184.40,1712.90 V1770 Z" fill="#8e3a3a"/><path d="M1185.31,1770 V1710.00 A2.3,2.3 0 0 1 1190.31,1710.00 V1770 Z" fill="#4b6bb4"/><path d="M1191.21,1770 V1729.50 A2.3,2.3 0 0 1 1196.21,1729.50 V1770 Z" fill="#4b6bb4"/><path d="M1197.12,1770 V1732.00 A2.3,2.3 0 0 1 1202.12,1732.00 V1770 Z" fill="#4b6bb4"/><path d="M1203.03,1770 V1749.90 A2.3,2.3 0 0 1 1208.03,1749.90 V1770 Z" fill="#4b6bb4"/><path d="M1208.93,1770 V1750.90 A2.3,2.3 0 0 1 1213.93,1750.90 V1770 Z" fill="#4b6bb4"/><path d="M1214.84,1770 V1747.00 A2.3,2.3 0 0 1 1219.84,1747.00 V1770 Z" fill="#4b6bb4"/><path d="M1220.74,1770 V1758.70 A2.3,2.3 0 0 1 1225.74,1758.70 V1770 Z" fill="#4b6bb4"/><path d="M1226.65,1770 V1751.30 A2.3,2.3 0 0 1 1231.65,1751.30 V1770 Z" fill="#4b6bb4"/><path d="M1232.56,1770 V1756.30 A2.3,2.3 0 0 1 1237.56,1756.30 V1770 Z" fill="#4b6bb4"/><path d="M1238.46,1770 V1751.90 A2.3,2.3 0 0 1 1243.46,1751.90 V1770 Z" fill="#4b6bb4"/><path d="M1244.37,1770 V1751.90 A2.3,2.3 0 0 1 1249.37,1751.90 V1770 Z" fill="#4b6bb4"/><path d="M1250.27,1770 V1751.90 A2.3,2.3 0 0 1 1255.27,1751.90 V1770 Z" fill="#4b6bb4"/><path d="M1256.18,1770 V1751.90 A2.3,2.3 0 0 1 1261.18,1751.90 V1770 Z" fill="#4b6bb4"/><path d="M1262.09,1770 V1750.90 A2.3,2.3 0 0 1 1267.09,1750.90 V1770 Z" fill="#4b6bb4"/><path d="M1267.99,1770 V1752.80 A2.3,2.3 0 0 1 1272.99,1752.80 V1770 Z" fill="#4b6bb4"/><path d="M1273.90,1770 V1750.30 A2.3,2.3 0 0 1 1278.90,1750.30 V1770 Z" fill="#4b6bb4"/><path d="M1279.80,1770 V1749.90 A2.3,2.3 0 0 1 1284.80,1749.90 V1770 Z" fill="#4b6bb4"/><path d="M1285.71,1770 V1749.90 A2.3,2.3 0 0 1 1290.71,1749.90 V1770 Z" fill="#4b6bb4"/><path d="M1291.62,1770 V1745.60 A2.3,2.3 0 0 1 1296.62,1745.60 V1770 Z" fill="#4b6bb4"/><path d="M1297.52,1770 V1749.30 A2.3,2.3 0 0 1 1302.52,1749.30 V1770 Z" fill="#4b6bb4"/><path d="M1303.43,1770 V1748.00 A2.3,2.3 0 0 1 1308.43,1748.00 V1770 Z" fill="#4b6bb4"/><path d="M1309.33,1770 V1746.60 A2.3,2.3 0 0 1 1314.33,1746.60 V1770 Z" fill="#4b6bb4"/><path d="M1315.24,1770 V1747.00 A2.3,2.3 0 0 1 1320.24,1747.00 V1770 Z" fill="#4b6bb4"/><path d="M1321.15,1770 V1748.90 A2.3,2.3 0 0 1 1326.15,1748.90 V1770 Z" fill="#4b6bb4"/><path d="M1327.05,1770 V1753.80 A2.3,2.3 0 0 1 1332.05,1753.80 V1770 Z" fill="#4b6bb4"/><path d="M1332.96,1770 V1748.00 A2.3,2.3 0 0 1 1337.96,1748.00 V1770 Z" fill="#4b6bb4"/><path d="M1338.86,1770 V1749.30 A2.3,2.3 0 0 1 1343.86,1749.30 V1770 Z" fill="#4b6bb4"/><path d="M1344.77,1770 V1741.70 A2.3,2.3 0 0 1 1349.77,1741.70 V1770 Z" fill="#4b6bb4"/><path d="M1350.68,1770 V1734.70 A2.3,2.3 0 0 1 1355.68,1734.70 V1770 Z" fill="#4b6bb4"/><path d="M1356.58,1770 V1721.70 A2.3,2.3 0 0 1 1361.58,1721.70 V1770 Z" fill="#4b6bb4"/><path d="M1362.49,1770 V1722.70 A2.3,2.3 0 0 1 1367.49,1722.70 V1770 Z" fill="#4b6bb4"/><path d="M1368.39,1770 V1717.20 A2.3,2.3 0 0 1 1373.39,1717.20 V1770 Z" fill="#4b6bb4"/><path d="M1374.30,1770 V1727.50 A2.3,2.3 0 0 1 1379.30,1727.50 V1770 Z" fill="#4b6bb4"/><path d="M1380.21,1770 V1743.50 A2.3,2.3 0 0 1 1385.21,1743.50 V1770 Z" fill="#4b6bb4"/><path d="M1386.11,1770 V1745.40 A2.3,2.3 0 0 1 1391.11,1745.40 V1770 Z" fill="#4b6bb4"/><path d="M1392.02,1770 V1736.70 A2.3,2.3 0 0 1 1397.02,1736.70 V1770 Z" fill="#4b6bb4"/><path d="M1397.92,1770 V1751.30 A2.3,2.3 0 0 1 1402.92,1751.30 V1770 Z" fill="#4b6bb4"/><path d="M1403.83,1770 V1738.80 A2.3,2.3 0 0 1 1408.83,1738.80 V1770 Z" fill="#4b6bb4"/><path d="M1409.74,1770 V1735.30 A2.3,2.3 0 0 1 1414.74,1735.30 V1770 Z" fill="#4b6bb4"/><path d="M1415.64,1770 V1743.70 A2.3,2.3 0 0 1 1420.64,1743.70 V1770 Z" fill="#4b6bb4"/><path d="M1421.55,1770 V1746.00 A2.3,2.3 0 0 1 1426.55,1746.00 V1770 Z" fill="#4b6bb4"/><path d="M1427.45,1770 V1739.20 A2.3,2.3 0 0 1 1432.45,1739.20 V1770 Z" fill="#4b6bb4"/><path d="M1433.36,1770 V1729.50 A2.3,2.3 0 0 1 1438.36,1729.50 V1770 Z" fill="#4b6bb4"/><path d="M1439.27,1770 V1728.10 A2.3,2.3 0 0 1 1444.27,1728.10 V1770 Z" fill="#4b6bb4"/><path d="M1445.17,1770 V1707.50 A2.3,2.3 0 0 1 1450.17,1707.50 V1770 Z" fill="#8e3a3a"/><path d="M1451.08,1770 V1682.70 A2.3,2.3 0 0 1 1456.08,1682.70 V1770 Z" fill="#4b6bb4"/><path d="M1456.98,1770 V1677.90 A2.3,2.3 0 0 1 1461.98,1677.90 V1770 Z" fill="#8e3a3a"/><path d="M1462.89,1770 V1633.10 A2.3,2.3 0 0 1 1467.89,1633.10 V1770 Z" fill="#8e3a3a"/><path d="M1468.80,1770 V1670.10 A2.3,2.3 0 0 1 1473.80,1670.10 V1770 Z" fill="#4b6bb4"/><path d="M1474.70,1770 V1694.80 A2.3,2.3 0 0 1 1479.70,1694.80 V1770 Z" fill="#4b6bb4"/><path d="M1480.61,1770 V1689.20 A2.3,2.3 0 0 1 1485.61,1689.20 V1770 Z" fill="#4b6bb4"/><path d="M1486.51,1770 V1727.10 A2.3,2.3 0 0 1 1491.51,1727.10 V1770 Z" fill="#4b6bb4"/><path d="M1492.42,1770 V1728.10 A2.3,2.3 0 0 1 1497.42,1728.10 V1770 Z" fill="#4b6bb4"/><path d="M1498.33,1770 V1721.30 A2.3,2.3 0 0 1 1503.33,1721.30 V1770 Z" fill="#4b6bb4"/><path d="M1504.23,1770 V1716.80 A2.3,2.3 0 0 1 1509.23,1716.80 V1770 Z" fill="#4b6bb4"/><path d="M1510.14,1770 V1727.10 A2.3,2.3 0 0 1 1515.14,1727.10 V1770 Z" fill="#4b6bb4"/><path d="M1516.04,1770 V1722.70 A2.3,2.3 0 0 1 1521.04,1722.70 V1770 Z" fill="#4b6bb4"/><path d="M1521.95,1770 V1722.70 A2.3,2.3 0 0 1 1526.95,1722.70 V1770 Z" fill="#4b6bb4"/><path d="M1527.86,1770 V1719.10 A2.3,2.3 0 0 1 1532.86,1719.10 V1770 Z" fill="#4b6bb4"/><path d="M1533.76,1770 V1730.80 A2.3,2.3 0 0 1 1538.76,1730.80 V1770 Z" fill="#4b6bb4"/><path d="M1539.67,1770 V1713.90 A2.3,2.3 0 0 1 1544.67,1713.90 V1770 Z" fill="#4b6bb4"/><path d="M1545.57,1770 V1722.70 A2.3,2.3 0 0 1 1550.57,1722.70 V1770 Z" fill="#4b6bb4"/><path d="M1551.48,1770 V1710.00 A2.3,2.3 0 0 1 1556.48,1710.00 V1770 Z" fill="#4b6bb4"/><path d="M1557.39,1770 V1713.30 A2.3,2.3 0 0 1 1562.39,1713.30 V1770 Z" fill="#4b6bb4"/><path d="M1563.29,1770 V1714.30 A2.3,2.3 0 0 1 1568.29,1714.30 V1770 Z" fill="#4b6bb4"/><path d="M1569.20,1770 V1713.30 A2.3,2.3 0 0 1 1574.20,1713.30 V1770 Z" fill="#4b6bb4"/><path d="M1575.10,1770 V1723.20 A2.3,2.3 0 0 1 1580.10,1723.20 V1770 Z" fill="#4b6bb4"/><path d="M1581.01,1770 V1727.10 A2.3,2.3 0 0 1 1586.01,1727.10 V1770 Z" fill="#4b6bb4"/><path d="M1586.92,1770 V1724.60 A2.3,2.3 0 0 1 1591.92,1724.60 V1770 Z" fill="#4b6bb4"/><path d="M1592.82,1770 V1726.20 A2.3,2.3 0 0 1 1597.82,1726.20 V1770 Z" fill="#4b6bb4"/><path d="M1598.73,1770 V1717.80 A2.3,2.3 0 0 1 1603.73,1717.80 V1770 Z" fill="#4b6bb4"/><path d="M1604.63,1770 V1720.10 A2.3,2.3 0 0 1 1609.63,1720.10 V1770 Z" fill="#4b6bb4"/><path d="M1610.54,1770 V1733.00 A2.3,2.3 0 0 1 1615.54,1733.00 V1770 Z" fill="#4b6bb4"/><path d="M1616.45,1770 V1718.20 A2.3,2.3 0 0 1 1621.45,1718.20 V1770 Z" fill="#4b6bb4"/><path d="M1622.35,1770 V1715.30 A2.3,2.3 0 0 1 1627.35,1715.30 V1770 Z" fill="#4b6bb4"/><path d="M1628.26,1770 V1719.10 A2.3,2.3 0 0 1 1633.26,1719.10 V1770 Z" fill="#4b6bb4"/><path d="M1634.16,1770 V1727.50 A2.3,2.3 0 0 1 1639.16,1727.50 V1770 Z" fill="#4b6bb4"/><path d="M1640.07,1770 V1674.60 A2.3,2.3 0 0 1 1645.07,1674.60 V1770 Z" fill="#8e3a3a"/><path d="M1645.98,1770 V1674.40 A2.3,2.3 0 0 1 1650.98,1674.40 V1770 Z" fill="#4b6bb4"/><path d="M1651.88,1770 V1673.00 A2.3,2.3 0 0 1 1656.88,1673.00 V1770 Z" fill="#4b6bb4"/><path d="M1657.79,1770 V1686.30 A2.3,2.3 0 0 1 1662.79,1686.30 V1770 Z" fill="#4b6bb4"/><path d="M1663.69,1770 V1718.20 A2.3,2.3 0 0 1 1668.69,1718.20 V1770 Z" fill="#4b6bb4"/><path d="M1669.60,1770 V1720.10 A2.3,2.3 0 0 1 1674.60,1720.10 V1770 Z" fill="#4b6bb4"/><path d="M1675.51,1770 V1719.70 A2.3,2.3 0 0 1 1680.51,1719.70 V1770 Z" fill="#4b6bb4"/><path d="M1681.41,1770 V1719.70 A2.3,2.3 0 0 1 1686.41,1719.70 V1770 Z" fill="#4b6bb4"/><path d="M1687.32,1770 V1739.20 A2.3,2.3 0 0 1 1692.32,1739.20 V1770 Z" fill="#4b6bb4"/><path d="M1693.22,1770 V1718.80 A2.3,2.3 0 0 1 1698.22,1718.80 V1770 Z" fill="#4b6bb4"/><path d="M1699.13,1770 V1720.10 A2.3,2.3 0 0 1 1704.13,1720.10 V1770 Z" fill="#4b6bb4"/><path d="M1705.04,1770 V1717.40 A2.3,2.3 0 0 1 1710.04,1717.40 V1770 Z" fill="#4b6bb4"/><path d="M1710.94,1770 V1717.80 A2.3,2.3 0 0 1 1715.94,1717.80 V1770 Z" fill="#4b6bb4"/><path d="M1716.85,1770 V1715.80 A2.3,2.3 0 0 1 1721.85,1715.80 V1770 Z" fill="#4b6bb4"/><path d="M1722.75,1770 V1718.80 A2.3,2.3 0 0 1 1727.75,1718.80 V1770 Z" fill="#4b6bb4"/><path d="M1728.66,1770 V1675.30 A2.3,2.3 0 0 1 1733.66,1675.30 V1770 Z" fill="#4b6bb4"/><path d="M1734.57,1770 V1677.50 A2.3,2.3 0 0 1 1739.57,1677.50 V1770 Z" fill="#4b6bb4"/><path d="M1740.47,1770 V1676.90 A2.3,2.3 0 0 1 1745.47,1676.90 V1770 Z" fill="#4b6bb4"/><path d="M1746.38,1770 V1648.10 A2.3,2.3 0 0 1 1751.38,1648.10 V1770 Z" fill="#4b6bb4"/><path d="M1752.28,1770 V1697.30 A2.3,2.3 0 0 1 1757.28,1697.30 V1770 Z" fill="#4b6bb4"/><path d="M1758.19,1770 V1678.80 A2.3,2.3 0 0 1 1763.19,1678.80 V1770 Z" fill="#4b6bb4"/><path d="M1764.10,1770 V1694.40 A2.3,2.3 0 0 1 1769.10,1694.40 V1770 Z" fill="#4b6bb4"/><path d="M1770.00,1770 V1718.80 A2.3,2.3 0 0 1 1775.00,1718.80 V1770 Z" fill="#4b6bb4"/><path d="M1775.91,1770 V1721.30 A2.3,2.3 0 0 1 1780.91,1721.30 V1770 Z" fill="#4b6bb4"/><path d="M1781.81,1770 V1715.80 A2.3,2.3 0 0 1 1786.81,1715.80 V1770 Z" fill="#4b6bb4"/><path d="M1787.72,1770 V1728.50 A2.3,2.3 0 0 1 1792.72,1728.50 V1770 Z" fill="#4b6bb4"/><path d="M1793.63,1770 V1713.90 A2.3,2.3 0 0 1 1798.63,1713.90 V1770 Z" fill="#4b6bb4"/><path d="M1799.53,1770 V1737.80 A2.3,2.3 0 0 1 1804.53,1737.80 V1770 Z" fill="#4b6bb4"/><path d="M1805.44,1770 V1730.80 A2.3,2.3 0 0 1 1810.44,1730.80 V1770 Z" fill="#4b6bb4"/><path d="M1811.34,1770 V1717.80 A2.3,2.3 0 0 1 1816.34,1717.80 V1770 Z" fill="#4b6bb4"/><path d="M1817.25,1770 V1723.60 A2.3,2.3 0 0 1 1822.25,1723.60 V1770 Z" fill="#4b6bb4"/><path d="M1834.97,1770 V1727.30 A2.3,2.3 0 0 1 1839.97,1727.30 V1770 Z" fill="#74a0f6"/><path d="M1840.87,1770 V1720.60 A2.3,2.3 0 0 1 1845.87,1720.60 V1770 Z" fill="#74a0f6"/><path d="M1846.78,1770 V1718.50 A2.3,2.3 0 0 1 1851.78,1718.50 V1770 Z" fill="#74a0f6"/><path d="M1852.69,1770 V1726.10 A2.3,2.3 0 0 1 1857.69,1726.10 V1770 Z" fill="#74a0f6"/><path d="M1858.59,1770 V1709.70 A2.3,2.3 0 0 1 1863.59,1709.70 V1770 Z" fill="#74a0f6"/><path d="M1864.50,1770 V1723.90 A2.3,2.3 0 0 1 1869.50,1723.90 V1770 Z" fill="#74a0f6"/><path d="M1870.40,1770 V1721.30 A2.3,2.3 0 0 1 1875.40,1721.30 V1770 Z" fill="#74a0f6"/><path d="M1876.31,1770 V1724.70 A2.3,2.3 0 0 1 1881.31,1724.70 V1770 Z" fill="#74a0f6"/><path d="M1882.22,1770 V1715.40 A2.3,2.3 0 0 1 1887.22,1715.40 V1770 Z" fill="#74a0f6"/><path d="M1888.12,1770 V1720.60 A2.3,2.3 0 0 1 1893.12,1720.60 V1770 Z" fill="#74a0f6"/><rect x="1818" y="1630" width="18" height="140" fill="#474f6b"/><rect x="1826" y="1649.6" width="2.2" height="100.5" fill="#ffffff"/><rect x="1908" y="1630" width="18" height="140" fill="#6e778b"/><rect x="1916.2" y="1649.6" width="2.2" height="100.5" fill="#ffffff"/></svg>
<svg width="2632" height="1924" viewBox="0 0 2632 1924"><polyline points="127.3,30.6 134.8,37.0 127.3,43.4" fill="none" stroke="#9aa3b5" stroke-width="3" stroke-linecap="round" stroke-linejoin="round"/><polyline points="350.3,30.6 357.8,37.0 350.3,43.4" fill="none" stroke="#9aa3b5" stroke-width="3" stroke-linecap="round" stroke-linejoin="round"/><polyline points="661.3,30.6 668.8,37.0 661.3,43.4" fill="none" stroke="#9aa3b5" stroke-width="3" stroke-linecap="round" stroke-linejoin="round"/><polyline points="772.3,30.6 779.8,37.0 772.3,43.4" fill="none" stroke="#9aa3b5" stroke-width="3" stroke-linecap="round" stroke-linejoin="round"/><polyline points="567.5,80.3 573.25,87.3 579,80.3" fill="none" stroke="#8089a0" stroke-width="2.6" stroke-linecap="round" stroke-linejoin="round"/><path d="M2125,43.5 C2117,43.5 2111.5,50 2111.5,58 L2111.5,64.5 C2111.5,68.5 2110,70.5 2107,74 C2104,77.5 2104.5,80.5 2110,81.5 C2117,83 2133,83 2140,81.5 C2145.5,80.5 2146,77.5 2143,74 C2140,70.5 2138.5,68.5 2138.5,64.5 L2138.5,58 C2138.5,50 2133,43.5 2125,43.5 Z" fill="none" stroke="#a0a8b8" stroke-width="3" stroke-linejoin="round"/><path d="M2119.5,82 Q2121,86.5 2125,86.5 Q2129,86.5 2130.5,82 Z" fill="#a0a8b8"/><circle cx="2138.7" cy="50.8" r="17.7" fill="#e5533d"/><text x="2139.5" y="57.6" font-family="Liberation Sans" font-size="21.5" fill="#fff" text-anchor="middle">4</text><rect x="2197" y="41.6" width="2" height="46.8" fill="#e3e5eb"/><circle cx="2275.1" cy="64.6" r="14.2" fill="none" stroke="#a0a8b8" stroke-width="3"/><circle cx="2275.1" cy="64.6" r="6.5" fill="none" stroke="#a0a8b8" stroke-width="3"/><line x1="2279.7" y1="69.2" x2="2285.1" y2="74.6" stroke="#a0a8b8" stroke-width="3"/><line x1="2270.5" y1="69.2" x2="2265.1" y2="74.6" stroke="#a0a8b8" stroke-width="3"/><line x1="2270.5" y1="60.0" x2="2265.1" y2="54.6" stroke="#a0a8b8" stroke-width="3"/><line x1="2279.7" y1="60.0" x2="2285.1" y2="54.6" stroke="#a0a8b8" stroke-width="3"/><polyline points="2439.5,64.8 2446.0,71.5 2452.5,64.8" fill="none" stroke="#9aa3b5" stroke-width="3.2" stroke-linecap="round" stroke-linejoin="round"/><circle cx="2535.8" cy="65" r="22" fill="none" stroke="#a0a8b8" stroke-width="3"/><ellipse cx="2536" cy="62.6" rx="8.2" ry="9.8" fill="none" stroke="#a0a8b8" stroke-width="3"/><path d="M2523.5,85 C2525,80.5 2530,79 2536,79 C2542,79 2547,80.5 2548.5,85" fill="none" stroke="#a0a8b8" stroke-width="3"/><polyline points="2577.2,61.6 2583.7,68.4 2590.2,61.6" fill="none" stroke="#9aa3b5" stroke-width="3.2" stroke-linecap="round" stroke-linejoin="round"/><line x1="1958" y1="295.5" x2="1971.5" y2="309" stroke="#a0a8b8" stroke-width="3.2" stroke-linecap="round"/><line x1="1971.5" y1="295.5" x2="1958" y2="309" stroke="#a0a8b8" stroke-width="3.2" stroke-linecap="round"/><polyline points="2007,298.8 2013.3,305.5 2019.6,298.8" fill="none" stroke="#9aa3b5" stroke-width="3.2" stroke-linecap="round" stroke-linejoin="round"/><circle cx="2123" cy="302.2" r="14.2" fill="none" stroke="#a0a8b8" stroke-width="3"/><polyline points="2123,293.5 2123,303 2130,303" fill="none" stroke="#a0a8b8" stroke-width="3" stroke-linecap="round" stroke-linejoin="round"/><polyline points="2318,299.3 2324.3,306.5 2330.6,299.3" fill="none" stroke="#9aa3b5" stroke-width="3.2" stroke-linecap="round" stroke-linejoin="round"/><path d="M2445.5,296 A13,13 0 0 0 2423,298" fill="none" stroke="#a0a8b8" stroke-width="3" stroke-linecap="round"/><polyline points="2446.5,287.5 2446,296.5 2437.5,296" fill="none" stroke="#a0a8b8" stroke-width="3" stroke-linecap="round" stroke-linejoin="round"/><path d="M2423.5,308 A13,13 0 0 0 2446,306" fill="none" stroke="#a0a8b8" stroke-width="3" stroke-linecap="round"/><polyline points="2422.5,316.5 2423,307.5 2431.5,308" fill="none" stroke="#a0a8b8" stroke-width="3" stroke-linecap="round" stroke-linejoin="round"/></svg>
<div class="t" style="top:24.8px;font-size:24px;line-height:24px;color:#6a7489;letter-spacing:0.33px;left:41.2px;">Home</div>
<div class="t" style="top:24.8px;font-size:24px;line-height:24px;color:#6a7489;letter-spacing:0.44px;left:155.8px;">Load Balancers</div>
<div class="t" style="top:24.8px;font-size:24px;line-height:24px;color:#6a7489;letter-spacing:1.18px;left:378.3px;">webapp-api-protection</div>
<div class="t" style="top:24.8px;font-size:24px;line-height:24px;color:#6a7489;letter-spacing:0.44px;left:689.0px;">Mesh</div>
<div class="t" style="top:24.8px;font-size:24px;line-height:24px;color:#6a7489;letter-spacing:0.66px;left:798.7px;">Service Mesh</div>
<div class="t" style="top:67.1px;font-size:36px;line-height:36px;color:#0f1d4f;letter-spacing:1.30px;left:41.0px;">Service Mesh: waap-boutique</div>
<div class="t" style="top:178.1px;font-size:30px;line-height:30px;color:#6a7489;letter-spacing:-0.42px;left:43.4px;">Service Graph</div>
<div class="t" style="top:178.1px;font-size:30px;line-height:30px;color:#6a7489;letter-spacing:-0.65px;left:303.1px;">API Endpoints</div>
<div class="t" style="top:178.1px;font-size:30px;line-height:30px;color:#6a7489;letter-spacing:-0.48px;left:557.5px;">Dashboard</div>
<div class="t" style="top:178.1px;font-size:30px;line-height:30px;color:#6a7489;letter-spacing:-0.11px;left:942.9px;">Virtual Services</div>
<div class="t" style="top:178.1px;font-size:30px;line-height:30px;color:#6a7489;letter-spacing:0.04px;left:1223.5px;">Alerts</div>
<div class="t" style="top:178.1px;font-size:30px;line-height:30px;color:#6a7489;letter-spacing:-0.72px;left:1371.2px;">Requests</div>
<div class="t" style="top:178.1px;font-size:30px;line-height:30px;color:#6a7489;letter-spacing:-0.22px;left:1565.9px;">Connections</div>
<div class="t" style="top:178.1px;font-size:30px;line-height:30px;color:#5078f2;font-weight:700;letter-spacing:-0.32px;left:768.6px;">Metrics</div>
<div class="t" style="top:287.5px;font-size:29px;line-height:29px;color:#5078f2;letter-spacing:-0.08px;left:72.0px;">Server</div>
<div class="t" style="top:287.5px;font-size:29px;line-height:29px;color:#6a7489;letter-spacing:0.03px;left:227.2px;">Client</div>
<div class="t" style="top:288.5px;font-size:29px;line-height:29px;color:#0f1d4f;letter-spacing:0.59px;left:1473.9px;">S:boutique-frontend.webapp-api...</div>
<div class="t" style="top:288.5px;font-size:29px;line-height:29px;color:#0f1d4f;letter-spacing:-0.19px;left:2156.4px;">Last 1 hour</div>
<div class="t" style="top:288.5px;font-size:29px;line-height:29px;color:#0f1d4f;letter-spacing:-0.17px;left:2467.2px;">Refresh</div>
<div class="t" style="top:51.0px;font-size:29px;line-height:29px;color:#0f1d4f;letter-spacing:0.57px;left:2308.0px;">Support</div>
<div class="t" style="top:418.4px;font-size:24px;line-height:24px;color:#6a7489;letter-spacing:0.30px;left:118.6px;">Request Rate</div>
<div class="t" style="top:1517.8px;font-size:24px;line-height:24px;color:#6a7489;left:-1051.8px;width:1200px;text-align:right;">0</div>
<div class="t" style="top:1365.4px;font-size:24px;line-height:24px;color:#6a7489;letter-spacing:2.01px;left:-1049.8px;width:1200px;text-align:right;">10</div>
<div class="t" style="top:1213.0px;font-size:24px;line-height:24px;color:#6a7489;letter-spacing:2.01px;left:-1049.8px;width:1200px;text-align:right;">20</div>
<div class="t" style="top:1060.6px;font-size:24px;line-height:24px;color:#6a7489;letter-spacing:2.01px;left:-1049.8px;width:1200px;text-align:right;">30</div>
<div class="t" style="top:908.2px;font-size:24px;line-height:24px;color:#6a7489;letter-spacing:2.01px;left:-1049.8px;width:1200px;text-align:right;">40</div>
<div class="t" style="top:755.8px;font-size:24px;line-height:24px;color:#6a7489;letter-spacing:2.01px;left:-1049.8px;width:1200px;text-align:right;">50</div>
<div class="t" style="top:603.4px;font-size:24px;line-height:24px;color:#6a7489;letter-spacing:2.01px;left:-1049.8px;width:1200px;text-align:right;">60</div>
<div class="t" style="top:1554.7px;font-size:24px;line-height:24px;color:#6a7489;left:-148.2px;width:1200px;text-align:center;letter-spacing:0.9px;">9:36 AM</div>
<div class="t" style="top:1583.5px;font-size:24px;line-height:24px;color:#6a7489;left:-148.2px;width:1200px;text-align:center;letter-spacing:0.8px;">2 Aug</div>
<div class="t" style="top:1554.7px;font-size:24px;line-height:24px;color:#6a7489;left:298.0px;width:1200px;text-align:center;letter-spacing:0.9px;">9:53 AM</div>
<div class="t" style="top:1583.5px;font-size:24px;line-height:24px;color:#6a7489;left:298.0px;width:1200px;text-align:center;letter-spacing:0.8px;">2 Aug</div>
<div class="t" style="top:1554.7px;font-size:24px;line-height:24px;color:#6a7489;left:744.2px;width:1200px;text-align:center;letter-spacing:0.9px;">10:10 AM</div>
<div class="t" style="top:1583.5px;font-size:24px;line-height:24px;color:#6a7489;left:744.2px;width:1200px;text-align:center;letter-spacing:0.8px;">2 Aug</div>
<div class="t" style="top:1554.7px;font-size:24px;line-height:24px;color:#6a7489;left:1190.4px;width:1200px;text-align:center;letter-spacing:0.9px;">10:26 AM</div>
<div class="t" style="top:1583.5px;font-size:24px;line-height:24px;color:#6a7489;left:1190.4px;width:1200px;text-align:center;letter-spacing:0.8px;">2 Aug</div>
<div class="t" style="top:1794.7px;font-size:24px;line-height:24px;color:#6a7489;left:-164.2px;width:1200px;text-align:center;letter-spacing:0.6px;">1:53 PM</div>
<div class="t" style="top:1823.7px;font-size:24px;line-height:24px;color:#6a7489;left:-164.2px;width:1200px;text-align:center;letter-spacing:0.2px;">1 Aug</div>
<div class="t" style="top:1794.7px;font-size:24px;line-height:24px;color:#6a7489;left:229.3px;width:1200px;text-align:center;letter-spacing:0.6px;">7:26 PM</div>
<div class="t" style="top:1823.7px;font-size:24px;line-height:24px;color:#6a7489;left:229.3px;width:1200px;text-align:center;letter-spacing:0.2px;">1 Aug</div>
<div class="t" style="top:1794.7px;font-size:24px;line-height:24px;color:#6a7489;left:623.0px;width:1200px;text-align:center;letter-spacing:0.6px;">1:00 AM</div>
<div class="t" style="top:1823.7px;font-size:24px;line-height:24px;color:#6a7489;left:623.0px;width:1200px;text-align:center;letter-spacing:0.9px;">2 Aug</div>
<div class="t" style="top:1794.7px;font-size:24px;line-height:24px;color:#6a7489;left:1016.8px;width:1200px;text-align:center;letter-spacing:0.6px;">6:33 AM</div>
<div class="t" style="top:1823.7px;font-size:24px;line-height:24px;color:#6a7489;left:1016.8px;width:1200px;text-align:center;letter-spacing:0.9px;">2 Aug</div>
<div class="t" style="top:490.2px;font-size:24px;line-height:24px;color:#a3aab9;letter-spacing:0.69px;left:1995.1px;">Trend for Last 60min</div>
<div class="t" style="top:561.6px;font-size:24px;line-height:24px;color:#6a7489;font-weight:700;letter-spacing:-0.11px;left:1994.5px;">Rate</div>
<div class="t" style="top:637.2px;font-size:24px;line-height:24px;color:#0f1d4f;font-weight:700;letter-spacing:0.11px;left:2060.3px;">Request Rate</div>
<div class="t" style="top:637.2px;font-size:24px;line-height:24px;color:#0f1d4f;font-weight:700;left:1318.7px;width:1200px;text-align:right;">17.5/s</div>
<div class="t" style="top:759.5px;font-size:24px;line-height:24px;color:#0f1d4f;left:2060.3px;letter-spacing:0.45px;">Error Rate</div>
<div class="t" style="top:759.5px;font-size:24px;line-height:24px;color:#0f1d4f;left:1318.7px;width:1200px;text-align:right;letter-spacing:0.5px;">0.55/s</div>
<div class="t" style="top:881.9px;font-size:24px;line-height:24px;color:#0f1d4f;left:2060.3px;letter-spacing:0.45px;">Connection Rate</div>
<div class="t" style="top:881.9px;font-size:24px;line-height:24px;color:#0f1d4f;left:1318.7px;width:1200px;text-align:right;letter-spacing:0.5px;">0/s</div>
<div class="t" style="top:1004.2px;font-size:24px;line-height:24px;color:#0f1d4f;left:2060.3px;letter-spacing:0.45px;">Connection Error Rate</div>
<div class="t" style="top:1004.2px;font-size:24px;line-height:24px;color:#0f1d4f;left:1318.7px;width:1200px;text-align:right;letter-spacing:0.5px;">0/s</div>
<div class="t" style="top:1126.6px;font-size:24px;line-height:24px;color:#0f1d4f;left:2060.3px;letter-spacing:0.45px;">Error Rate 4xx</div>
<div class="t" style="top:1126.6px;font-size:24px;line-height:24px;color:#0f1d4f;left:1318.7px;width:1200px;text-align:right;letter-spacing:0.5px;">0.54/s</div>
<div class="t" style="top:1248.9px;font-size:24px;line-height:24px;color:#0f1d4f;left:2060.3px;letter-spacing:0.45px;">Error Rate 5xx</div>
<div class="t" style="top:1248.9px;font-size:24px;line-height:24px;color:#0f1d4f;left:1318.7px;width:1200px;text-align:right;letter-spacing:0.5px;">0.01/s</div>
<div class="t" style="top:1371.3px;font-size:24px;line-height:24px;color:#0f1d4f;left:2060.3px;letter-spacing:0.45px;">Error Rate Client</div>
<div class="t" style="top:1371.3px;font-size:24px;line-height:24px;color:#0f1d4f;left:1318.7px;width:1200px;text-align:right;letter-spacing:0.5px;">0/s</div>
<div class="t" style="top:1493.6px;font-size:24px;line-height:24px;color:#0f1d4f;left:2060.3px;letter-spacing:0.45px;">Error Rate Upstream</div>
<div class="t" style="top:1493.6px;font-size:24px;line-height:24px;color:#0f1d4f;left:1318.7px;width:1200px;text-align:right;letter-spacing:0.5px;">0/s</div>
<div class="t" style="top:1630.9px;font-size:24px;line-height:24px;color:#6a7489;font-weight:700;letter-spacing:0.42px;left:1994.5px;">Throughput</div>
<div class="t" style="top:1706.8px;font-size:24px;line-height:24px;color:#0f1d4f;letter-spacing:0.87px;left:2060.3px;">Upstream Throughput</div>
<div class="t" style="top:1706.8px;font-size:24px;line-height:24px;color:#0f1d4f;letter-spacing:0.92px;left:1319.6px;width:1200px;text-align:right;">52kbps</div>
<div class="t" style="top:1828.7px;font-size:24px;line-height:24px;color:#0f1d4f;letter-spacing:0.86px;left:2060.3px;">Downstream Throughput</div>
<div class="t" style="top:1828.7px;font-size:24px;line-height:24px;color:#0f1d4f;letter-spacing:0.38px;left:1319.1px;width:1200px;text-align:right;">1.4Mbps</div>
<div class="t" style="left:-63.2px;top:1003.6px;font-size:24px;line-height:24px;color:#6a7489;letter-spacing:0.45px;width:300px;text-align:center;transform:rotate(-90deg);transform-origin:150px 12px">Request Rate (/s)</div>
<!-- bottom shade -->
<div class="a" style="left:0;top:1850px;width:2632px;height:74px;background:linear-gradient(to bottom,rgba(30,30,50,0) 0%,rgba(30,30,50,0.03) 45%,rgba(30,30,50,0.11) 100%)"></div>
</body></html>
